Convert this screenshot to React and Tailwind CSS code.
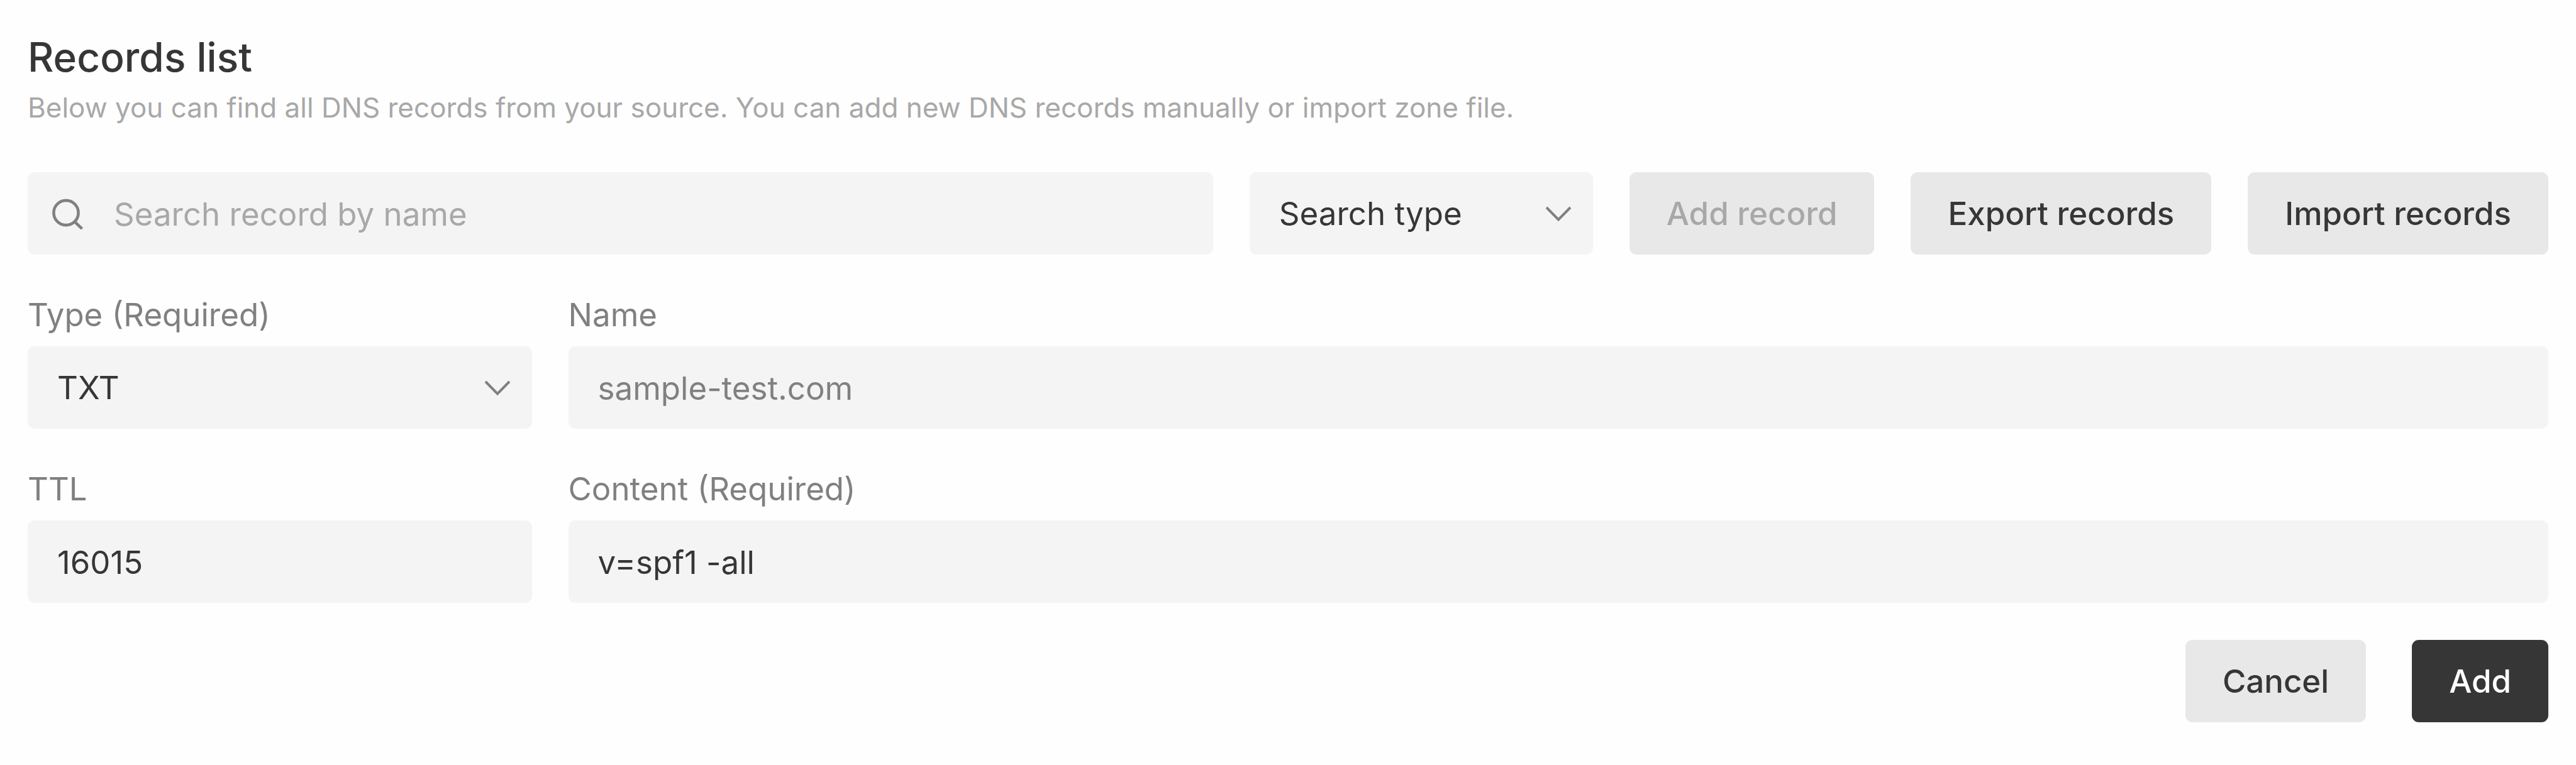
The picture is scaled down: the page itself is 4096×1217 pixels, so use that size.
import { useState } from 'react'

const fieldClass = 'h-[131px] w-full rounded-[11px] bg-[#f4f4f4] pt-[2px] text-[51px] text-[#363636] outline-none'
const buttonClass = 'h-[131px] shrink-0 rounded-[11px] px-[59px] pt-[2px] text-[51px] font-medium whitespace-nowrap'

function Chevron() {
    return (
        <svg
            viewBox="0 0 44 26"
            className="pointer-events-none absolute top-1/2 right-[33px] h-[26px] w-[44px] -translate-y-1/2"
            fill="none"
            stroke="#808080"
            strokeWidth="4"
            aria-hidden="true"
        >
            <path d="M3 3 L22 22.5 L41 3" />
        </svg>
    )
}

function SearchIcon() {
    return (
        <svg
            viewBox="0 0 50 50"
            className="pointer-events-none absolute top-1/2 left-[38px] h-[50px] w-[50px] -translate-y-1/2"
            fill="none"
            stroke="#808080"
            strokeWidth="4.6"
            aria-hidden="true"
        >
            <circle cx="23" cy="23.5" r="19.6" />
            <path d="M36.5 37.5 L48.5 49" />
        </svg>
    )
}

function Field({ id, label, children }) {
    return (
        <div>
            <label htmlFor={id} className="mb-[17px] block text-[51px] leading-[66px] text-[#808080]">
                {label}
            </label>
            <div className="relative">{children}</div>
        </div>
    )
}

export default function App() {
    const [search, setSearch] = useState('')
    const [searchType, setSearchType] = useState('')
    const [record, setRecord] = useState({ type: 'TXT', name: '', ttl: '16015', content: 'v=spf1 -all' })

    const handleChange = (e) => setRecord({ ...record, [e.target.name]: e.target.value })

    return (
        <div className="min-h-screen bg-[#fefefe] px-[44px] pt-[52px] pb-[67px] font-['Inter',sans-serif]">
            <h1 className="text-[64px] leading-[78px] font-medium text-[#363636]">Records list</h1>
            <p className="text-[44px] leading-[82px] text-[#a8a8a8]">
                Below you can find all DNS records from your source. You can add new DNS records manually or import zone file.
            </p>

            {/* Search and actions */}
            <div className="mt-[62px] flex gap-[58px]">
                <div className="relative flex-1">
                    <SearchIcon />
                    <input
                        type="text"
                        aria-label="Search record by name"
                        placeholder="Search record by name"
                        value={search}
                        onChange={(e) => setSearch(e.target.value)}
                        className={`${fieldClass} pr-[47px] pl-[137px] placeholder:text-[#a8a8a8]`}
                    />
                </div>
                <div className="relative w-[546px] shrink-0">
                    <select
                        aria-label="Search type"
                        value={searchType}
                        onChange={(e) => setSearchType(e.target.value)}
                        className={`${fieldClass} appearance-none px-[47px]`}
                    >
                        <option value="">Search type</option>
                        <option>A</option>
                        <option>CNAME</option>
                        <option>MX</option>
                        <option>TXT</option>
                    </select>
                    <Chevron />
                </div>
                <button type="button" disabled className={`${buttonClass} bg-[#e8e8e8] text-[#a8a8a8]`}>
                    Add record
                </button>
                <button type="button" className={`${buttonClass} bg-[#e8e8e8] text-[#363636]`}>
                    Export records
                </button>
                <button type="button" className={`${buttonClass} bg-[#e8e8e8] text-[#363636]`}>
                    Import records
                </button>
            </div>

            {/* Record form */}
            <form onSubmit={(e) => e.preventDefault()} className="mt-[63px]">
                <div className="grid grid-cols-[20%_1fr] gap-x-[58px] gap-y-[63px]">
                    <Field id="type" label="Type (Required)">
                        <select
                            id="type"
                            name="type"
                            value={record.type}
                            onChange={handleChange}
                            className={`${fieldClass} appearance-none px-[47px]`}
                        >
                            <option>A</option>
                            <option>CNAME</option>
                            <option>MX</option>
                            <option>TXT</option>
                        </select>
                        <Chevron />
                    </Field>
                    <Field id="name" label="Name">
                        <input
                            id="name"
                            name="name"
                            type="text"
                            placeholder="sample-test.com"
                            value={record.name}
                            onChange={handleChange}
                            className={`${fieldClass} px-[47px] placeholder:text-[#808080]`}
                        />
                    </Field>
                    <Field id="ttl" label="TTL">
                        <input
                            id="ttl"
                            name="ttl"
                            type="text"
                            value={record.ttl}
                            onChange={handleChange}
                            className={`${fieldClass} px-[47px]`}
                        />
                    </Field>
                    <Field id="content" label="Content (Required)">
                        <input
                            id="content"
                            name="content"
                            type="text"
                            value={record.content}
                            onChange={handleChange}
                            className={`${fieldClass} px-[47px]`}
                        />
                    </Field>
                </div>
                <div className="mt-[59px] flex justify-end gap-[73px]">
                    <button type="button" className={`${buttonClass} bg-[#e8e8e8] text-[#363636]`}>
                        Cancel
                    </button>
                    <button type="submit" className={`${buttonClass} bg-[#363636] text-white`}>
                        Add
                    </button>
                </div>
            </form>
        </div>
    )
}
